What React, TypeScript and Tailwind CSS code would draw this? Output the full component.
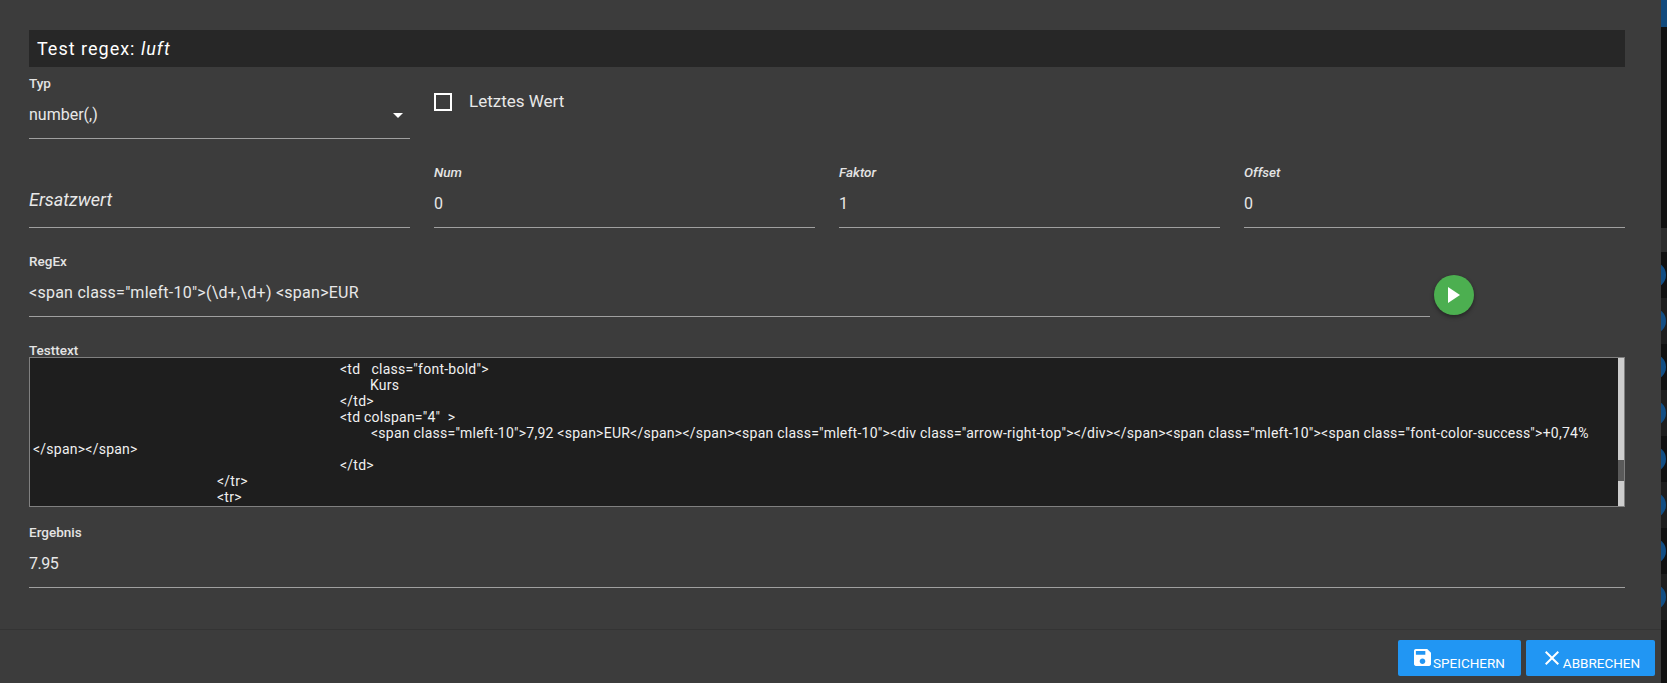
const testLines = [
  { indent: "pl-[307px]", text: '<td   class="font-bold">' },
  { indent: "pl-[337px]", text: "Kurs" },
  { indent: "pl-[307px]", text: "</td>" },
  { indent: "pl-[307px]", text: '<td colspan="4"  >' },
  {
    indent: "pl-[338px]",
    text: '<span class="mleft-10">7,92 <span>EUR</span></span><span class="mleft-10"><div class="arrow-right-top"></div></span><span class="mleft-10"><span class="font-color-success">+0,74%',
  },
  { indent: "pl-0", text: "</span></span>" },
  { indent: "pl-[307px]", text: "</td>" },
  { indent: "pl-[184px]", text: "</tr>" },
  { indent: "pl-[184px]", text: "<tr>" },
];

function Field({
  label,
  value,
  italicLabel = false,
  className = "",
  valueClass = "",
}: {
  label: string;
  value: string;
  italicLabel?: boolean;
  className?: string;
  valueClass?: string;
}) {
  return (
    <div className={`flex h-[62px] flex-col border-b border-[#a0a0a0] ${className}`}>
      <div className={`h-[14px] text-[13.5px] leading-[12px] font-medium text-[#e4e4e4] ${italicLabel ? "italic" : ""}`}>
        {label}
      </div>
      <div className={`mt-[12px] h-[24px] text-[16px] leading-[24px] whitespace-pre text-[#e8e8e8] ${valueClass}`}>
        {value}
      </div>
    </div>
  );
}

function SaveIcon() {
  return (
    <svg viewBox="3 3 18 18" className="h-[17px] w-[17px] fill-white">
      <path d="M17 3H5c-1.11 0-2 .9-2 2v14c0 1.1.89 2 2 2h14c1.1 0 2-.9 2-2V7l-4-4zm-5 16c-1.66 0-3-1.34-3-3s1.34-3 3-3 3 1.34 3 3-1.34 3-3 3zm3-10H5V5h10v4z" />
    </svg>
  );
}

function CloseIcon() {
  return (
    <svg viewBox="5 5 14 14" className="h-[14px] w-[14px] fill-white">
      <path d="M19 6.41L17.59 5 12 10.59 6.41 5 5 6.41 10.59 12 5 17.59 6.41 19 12 13.41 17.59 19 19 17.59 13.41 12z" />
    </svg>
  );
}

function BackdropStrip() {
  const rows = [0, 1, 2, 3, 4, 5, 6, 7];
  return (
    <aside className="flex h-[683px] w-[6px] flex-col overflow-hidden bg-[#111111]">
      <div className="h-[27px] shrink-0 bg-[#124a7c]" />
      <div className="h-[201px] shrink-0" />
      <div className="h-[24px] shrink-0 bg-[#2d2d2d]" />
      {rows.map((r) => (
        <div
          key={r}
          className={`flex h-[46px] shrink-0 items-center ${r % 2 === 0 ? "bg-[#111111]" : "bg-[#1e1e1e]"}`}
        >
          <div className="-ml-[21px] h-[26px] w-[26px] shrink-0 rounded-full bg-[#124e84]" />
        </div>
      ))}
    </aside>
  );
}

export default function App() {
  return (
    <div className="flex h-[683px] w-[1667px] overflow-hidden bg-[#111111] font-['Roboto',sans-serif] text-white">
      <main className="flex h-[683px] w-[1661px] flex-col bg-[#3c3c3c]">
        <div className="flex-1 pt-[30px] pr-[36px] pl-[29px]">
          <div className="flex h-[37px] items-center bg-[#272727] pl-[8px] text-[18px] tracking-[1px] text-white">
            Test regex:&nbsp;<i>luft</i>
          </div>

          <div className="mt-[10px] grid grid-cols-4 gap-x-[24px]">
            <div className="flex h-[62px] flex-col border-b border-[#a0a0a0]">
              <div className="h-[14px] text-[13.5px] leading-[12px] font-medium text-[#e4e4e4]">Typ</div>
              <div className="mt-[12px] flex h-[24px] items-center justify-between pr-[7px] text-[16px] text-[#e8e8e8]">
                number(,)
                <svg viewBox="0 0 10 5" className="h-[5px] w-[10px] fill-white">
                  <path d="M0 0h10L5 5z" />
                </svg>
              </div>
            </div>
            <label className="mt-[16px] flex h-[18px] items-center gap-[17px] self-start text-[17px] text-[#e8e8e8]">
              <span className="h-[18px] w-[18px] border-2 border-white" />
              Letztes Wert
            </label>
          </div>

          <div className="mt-[27px] grid grid-cols-4 gap-x-[24px]">
            <div className="flex h-[62px] flex-col justify-end border-b border-[#a0a0a0] pb-[15px] text-[18px] leading-[24px] text-[#e8e8e8] italic">
              Ersatzwert
            </div>
            <Field label="Num" value="0" italicLabel />
            <Field label="Faktor" value="1" italicLabel />
            <Field label="Offset" value="0" italicLabel />
          </div>

          <div className="mt-[27px] flex">
            <Field
              label="RegEx"
              value={'<span class="mleft-10">(\\d+,\\d+) <span>EUR'}
              className="w-[1401px]"
              valueClass="tracking-[0.25px]"
            />
            <button className="mt-[20px] ml-[4px] flex h-[40px] w-[40px] items-center justify-center rounded-full bg-[#4caf50] shadow-[0_2px_4px_rgba(0,0,0,0.4)]">
              <svg viewBox="0 0 12 16" className="h-[16px] w-[12px] fill-white">
                <path d="M0 0l12 8-12 8z" />
              </svg>
            </button>
          </div>

          <div className="mt-[27px] h-[13px] text-[13.5px] leading-[12px] font-medium text-[#e4e4e4]">Testtext</div>
          <div className="flex h-[150px] border border-[#808080] bg-[#1e1e1e]">
            <div className="flex-1 pt-[3px] pl-[3px] text-[14px] leading-[16px] tracking-[0.24px] whitespace-pre text-[#f0f0f0]">
              {testLines.map((line, i) => (
                <div key={i} className={`h-[16px] ${line.indent}`}>
                  {line.text}
                </div>
              ))}
            </div>
            <div className="flex w-[6px] flex-col bg-[#cdcdcd]">
              <div className="mt-[102px] h-[21px] bg-[#5a5a5a]" />
            </div>
          </div>

          <Field label="Ergebnis" value="7.95" className="mt-[19px]" valueClass="tracking-[-0.5px]" />
        </div>

        <footer className="flex h-[54px] justify-end gap-[5px] border-t border-[#343434] pt-[10px] pr-[6px]">
          <button className="flex h-[36px] w-[123px] items-start justify-center rounded-[2px] bg-[#2196f3] pt-[9px] text-[13.5px]">
            <SaveIcon />
            <span className="mt-[7px] ml-[2px] leading-[14px]">SPEICHERN</span>
          </button>
          <button className="flex h-[36px] w-[129px] items-start justify-center rounded-[2px] bg-[#2196f3] pt-[11px] pl-[4px] text-[13.5px]">
            <CloseIcon />
            <span className="mt-[5px] ml-[4px] leading-[14px]">ABBRECHEN</span>
          </button>
        </footer>
      </main>
      <BackdropStrip />
    </div>
  );
}
